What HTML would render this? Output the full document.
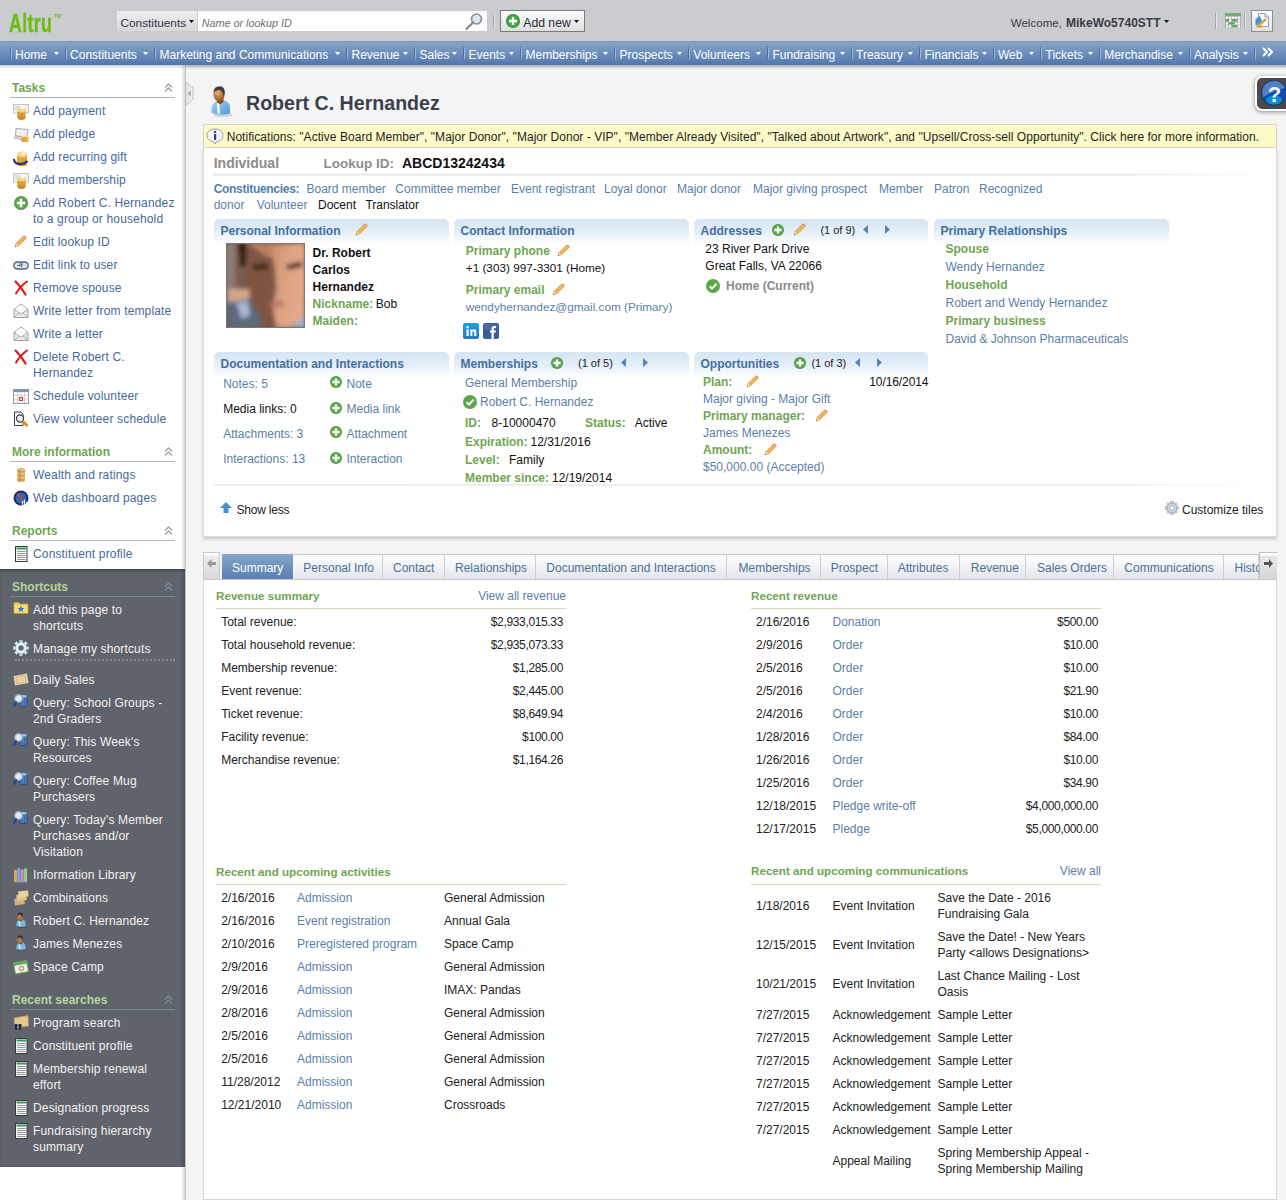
<!DOCTYPE html>
<html><head><meta charset="utf-8"><style>html,body{margin:0;padding:0;width:1286px;height:1200px;overflow:hidden;background:#f4f4f4;font-family:"Liberation Sans",sans-serif;font-size:12px;color:#1e1e1e;position:relative}
.t{position:absolute;white-space:nowrap;line-height:16px;font-size:12px}
.b{font-weight:bold}
.lk{color:#46699b}
.lk2{color:#5b7fa6}
.gr{color:#70a552;font-weight:bold}
.th{color:#44709f;font-weight:bold}
.wh{color:#f2f2f2}
.nav{color:#fff}
svg{position:absolute;overflow:visible}
</style></head>
<body>
<div style="position:absolute;left:0px;top:0px;width:1286px;height:41px;background:#cbccd0"></div>
<div class="t b" style="left:9px;top:9px;font-size:25px;line-height:28px;color:#6cbd14;letter-spacing:0.5px;-webkit-text-stroke:0.5px #6cbd14;transform:scaleX(0.71);transform-origin:0 0">Altru</div>
<div class="t b" style="left:54px;top:12.5px;font-size:5px;line-height:7px;color:#6cbd14">TM</div>
<div style="position:absolute;left:117px;top:11px;width:80px;height:20px;background:linear-gradient(#eeeeee,#d8d8d8)"></div>
<div class="t " style="left:120.5px;top:15.00px;color:#34344a;font-size:11.8px">Constituents</div>
<svg style="left:189px;top:20px" width="5" height="3" viewBox="0 0 5 3"><path d="M0 0 H5 L2.5 3Z" fill="#111"/></svg>
<div style="position:absolute;left:198px;top:11px;width:289px;height:20px;background:linear-gradient(#f3f3f3,#fff 4px)"></div>
<div class="t " style="left:201.7px;top:15.00px;color:#707070;font-style:italic;font-size:10.8px">Name or lookup ID</div>
<svg style="left:465px;top:13px" width="18" height="17" viewBox="0 0 18 17"><circle cx="11.5" cy="6" r="5" fill="#dbe9f5" stroke="#8b8b8b" stroke-width="1.6"/><path d="M8 9.5 L1.5 16" stroke="#8a8a8a" stroke-width="2.4" stroke-linecap="round"/></svg>
<div style="position:absolute;left:493px;top:12px;width:1px;height:17px;background:linear-gradient(rgba(160,160,165,0),#a5a5aa 30%,#a5a5aa 70%,rgba(160,160,165,0))"></div>
<div style="position:absolute;left:494px;top:12px;width:1px;height:17px;background:#dedee0"></div>
<div style="position:absolute;left:500px;top:10px;width:83px;height:20px;background:linear-gradient(#fdfdfd,#dedede);border:1px solid #7b7b7b"></div>
<svg style="left:506px;top:14px" width="14" height="14" viewBox="0 0 14 14"><circle cx="7" cy="7" r="7" fill="#2d8a36"/><circle cx="7" cy="7" r="6" fill="#43a84a"/><path d="M7 3v8M3 7h8" stroke="#fff" stroke-width="2.4"/></svg>
<div class="t " style="left:523.3px;top:15.00px;color:#2a2a3a;font-size:12.2px">Add new</div>
<svg style="left:574px;top:20px" width="5" height="3" viewBox="0 0 5 3"><path d="M0 0 H5 L2.5 3Z" fill="#111"/></svg>
<div class="t " style="left:1010.7px;top:15.00px;color:#3b3b45;font-size:11.6px">Welcome,</div>
<div class="t b" style="left:1066px;top:15.00px;color:#3b3b45">MikeWo5740STT</div>
<svg style="left:1164px;top:20px" width="5" height="3" viewBox="0 0 5 3"><path d="M0 0 H5 L2.5 3Z" fill="#111"/></svg>
<div style="position:absolute;left:1215px;top:13px;width:1px;height:16px;background:#a9a9ad"></div>
<div style="position:absolute;left:1216px;top:13px;width:1px;height:16px;background:#e6e6e8"></div>
<svg style="left:1225px;top:13px" width="16" height="15" viewBox="0 0 16 15"><rect x="0" y="0" width="16" height="15" fill="#a9a9a9"/><rect x="0" y="0" width="16" height="3" fill="#6cb46a"/><rect x="1" y="3.7" width="2.2" height="2.1" fill="#fff"/><rect x="4" y="3.7" width="2.2" height="2.1" fill="#fff"/><rect x="7" y="3.7" width="2.2" height="2.1" fill="#fff"/><rect x="10" y="3.7" width="2.2" height="2.1" fill="#fff"/><rect x="13" y="3.7" width="2.2" height="2.1" fill="#fff"/><rect x="1" y="6.6" width="2.2" height="2.1" fill="#fff"/><rect x="4" y="6.6" width="2.2" height="2.1" fill="#fff"/><rect x="7" y="6.6" width="2.2" height="2.1" fill="#fff"/><rect x="10" y="6.6" width="2.2" height="2.1" fill="#fff"/><rect x="13" y="6.6" width="2.2" height="2.1" fill="#fff"/><rect x="1" y="9.5" width="2.2" height="2.1" fill="#fff"/><rect x="4" y="9.5" width="2.2" height="2.1" fill="#fff"/><rect x="7" y="9.5" width="2.2" height="2.1" fill="#fff"/><rect x="10" y="9.5" width="2.2" height="2.1" fill="#fff"/><rect x="13" y="9.5" width="2.2" height="2.1" fill="#fff"/><rect x="1" y="12.399999999999999" width="2.2" height="2.1" fill="#fff"/><rect x="4" y="12.399999999999999" width="2.2" height="2.1" fill="#fff"/><rect x="7" y="12.399999999999999" width="2.2" height="2.1" fill="#fff"/><rect x="10" y="12.399999999999999" width="2.2" height="2.1" fill="#fff"/><rect x="13" y="12.399999999999999" width="2.2" height="2.1" fill="#fff"/><rect x="1" y="6.2" width="3" height="2.4" fill="#4ea24c"/><rect x="7" y="6.2" width="5" height="2.4" fill="#5aa858"/><rect x="3.5" y="9.2" width="6" height="2.2" fill="#5aa858"/><rect x="7" y="12" width="5" height="2.2" fill="#5aa858"/></svg>
<div style="position:absolute;left:1244px;top:13px;width:1px;height:16px;background:#a9a9ad"></div>
<div style="position:absolute;left:1245px;top:13px;width:1px;height:16px;background:#e6e6e8"></div>
<div style="position:absolute;left:1251px;top:10px;width:20px;height:20px;background:linear-gradient(#fafafa,#e2e2e2);border:1px solid #8e8e8e"></div>
<svg style="left:1255px;top:13px" width="14" height="15" viewBox="0 0 14 15"><path d="M3.5 0.5 H10 L13.5 4 V13.5 H3.5Z" fill="#f4f8fc" stroke="#8aa2c8"/><path d="M10 0.5 V4 H13.5" fill="#dfe8f4" stroke="#8aa2c8"/><path d="M0.5 6 L5 3 L7 8 L4.5 12 H0.5Z" fill="#2f9ae0"/><path d="M3 13 L11 6" stroke="#e8a23a" stroke-width="2.4"/><path d="M1.5 13.5 H7" stroke="#e09a30" stroke-width="2"/></svg>
<div style="position:absolute;left:0px;top:41px;width:1286px;height:24px;background:linear-gradient(#6b8db8 0px,#86a4c6 1px,#7797c0 8px,#5b7fb2 20px,#5276ab 24px)"></div>
<div style="position:absolute;left:0px;top:65px;width:1286px;height:4px;background:linear-gradient(rgba(120,120,120,.35),rgba(200,200,200,0))"></div>
<div style="position:absolute;left:10px;top:46px;width:1px;height:13px;background:linear-gradient(rgba(86,106,156,.3),#566a9c 30%,#566a9c 70%,rgba(86,106,156,.3))"></div>
<div style="position:absolute;left:11px;top:47px;width:1px;height:13px;background:linear-gradient(rgba(154,180,212,.3),#a4bcdc 30%,#a4bcdc 70%,rgba(154,180,212,.3))"></div>
<div style="position:absolute;left:65px;top:46px;width:1px;height:13px;background:linear-gradient(rgba(86,106,156,.3),#566a9c 30%,#566a9c 70%,rgba(86,106,156,.3))"></div>
<div style="position:absolute;left:66px;top:47px;width:1px;height:13px;background:linear-gradient(rgba(154,180,212,.3),#a4bcdc 30%,#a4bcdc 70%,rgba(154,180,212,.3))"></div>
<div style="position:absolute;left:154px;top:46px;width:1px;height:13px;background:linear-gradient(rgba(86,106,156,.3),#566a9c 30%,#566a9c 70%,rgba(86,106,156,.3))"></div>
<div style="position:absolute;left:155px;top:47px;width:1px;height:13px;background:linear-gradient(rgba(154,180,212,.3),#a4bcdc 30%,#a4bcdc 70%,rgba(154,180,212,.3))"></div>
<div style="position:absolute;left:346px;top:46px;width:1px;height:13px;background:linear-gradient(rgba(86,106,156,.3),#566a9c 30%,#566a9c 70%,rgba(86,106,156,.3))"></div>
<div style="position:absolute;left:347px;top:47px;width:1px;height:13px;background:linear-gradient(rgba(154,180,212,.3),#a4bcdc 30%,#a4bcdc 70%,rgba(154,180,212,.3))"></div>
<div style="position:absolute;left:414px;top:46px;width:1px;height:13px;background:linear-gradient(rgba(86,106,156,.3),#566a9c 30%,#566a9c 70%,rgba(86,106,156,.3))"></div>
<div style="position:absolute;left:415px;top:47px;width:1px;height:13px;background:linear-gradient(rgba(154,180,212,.3),#a4bcdc 30%,#a4bcdc 70%,rgba(154,180,212,.3))"></div>
<div style="position:absolute;left:463px;top:46px;width:1px;height:13px;background:linear-gradient(rgba(86,106,156,.3),#566a9c 30%,#566a9c 70%,rgba(86,106,156,.3))"></div>
<div style="position:absolute;left:464px;top:47px;width:1px;height:13px;background:linear-gradient(rgba(154,180,212,.3),#a4bcdc 30%,#a4bcdc 70%,rgba(154,180,212,.3))"></div>
<div style="position:absolute;left:520px;top:46px;width:1px;height:13px;background:linear-gradient(rgba(86,106,156,.3),#566a9c 30%,#566a9c 70%,rgba(86,106,156,.3))"></div>
<div style="position:absolute;left:521px;top:47px;width:1px;height:13px;background:linear-gradient(rgba(154,180,212,.3),#a4bcdc 30%,#a4bcdc 70%,rgba(154,180,212,.3))"></div>
<div style="position:absolute;left:614px;top:46px;width:1px;height:13px;background:linear-gradient(rgba(86,106,156,.3),#566a9c 30%,#566a9c 70%,rgba(86,106,156,.3))"></div>
<div style="position:absolute;left:615px;top:47px;width:1px;height:13px;background:linear-gradient(rgba(154,180,212,.3),#a4bcdc 30%,#a4bcdc 70%,rgba(154,180,212,.3))"></div>
<div style="position:absolute;left:688px;top:46px;width:1px;height:13px;background:linear-gradient(rgba(86,106,156,.3),#566a9c 30%,#566a9c 70%,rgba(86,106,156,.3))"></div>
<div style="position:absolute;left:689px;top:47px;width:1px;height:13px;background:linear-gradient(rgba(154,180,212,.3),#a4bcdc 30%,#a4bcdc 70%,rgba(154,180,212,.3))"></div>
<div style="position:absolute;left:767px;top:46px;width:1px;height:13px;background:linear-gradient(rgba(86,106,156,.3),#566a9c 30%,#566a9c 70%,rgba(86,106,156,.3))"></div>
<div style="position:absolute;left:768px;top:47px;width:1px;height:13px;background:linear-gradient(rgba(154,180,212,.3),#a4bcdc 30%,#a4bcdc 70%,rgba(154,180,212,.3))"></div>
<div style="position:absolute;left:851px;top:46px;width:1px;height:13px;background:linear-gradient(rgba(86,106,156,.3),#566a9c 30%,#566a9c 70%,rgba(86,106,156,.3))"></div>
<div style="position:absolute;left:852px;top:47px;width:1px;height:13px;background:linear-gradient(rgba(154,180,212,.3),#a4bcdc 30%,#a4bcdc 70%,rgba(154,180,212,.3))"></div>
<div style="position:absolute;left:919px;top:46px;width:1px;height:13px;background:linear-gradient(rgba(86,106,156,.3),#566a9c 30%,#566a9c 70%,rgba(86,106,156,.3))"></div>
<div style="position:absolute;left:920px;top:47px;width:1px;height:13px;background:linear-gradient(rgba(154,180,212,.3),#a4bcdc 30%,#a4bcdc 70%,rgba(154,180,212,.3))"></div>
<div style="position:absolute;left:993px;top:46px;width:1px;height:13px;background:linear-gradient(rgba(86,106,156,.3),#566a9c 30%,#566a9c 70%,rgba(86,106,156,.3))"></div>
<div style="position:absolute;left:994px;top:47px;width:1px;height:13px;background:linear-gradient(rgba(154,180,212,.3),#a4bcdc 30%,#a4bcdc 70%,rgba(154,180,212,.3))"></div>
<div style="position:absolute;left:1040px;top:46px;width:1px;height:13px;background:linear-gradient(rgba(86,106,156,.3),#566a9c 30%,#566a9c 70%,rgba(86,106,156,.3))"></div>
<div style="position:absolute;left:1041px;top:47px;width:1px;height:13px;background:linear-gradient(rgba(154,180,212,.3),#a4bcdc 30%,#a4bcdc 70%,rgba(154,180,212,.3))"></div>
<div style="position:absolute;left:1099px;top:46px;width:1px;height:13px;background:linear-gradient(rgba(86,106,156,.3),#566a9c 30%,#566a9c 70%,rgba(86,106,156,.3))"></div>
<div style="position:absolute;left:1100px;top:47px;width:1px;height:13px;background:linear-gradient(rgba(154,180,212,.3),#a4bcdc 30%,#a4bcdc 70%,rgba(154,180,212,.3))"></div>
<div style="position:absolute;left:1189px;top:46px;width:1px;height:13px;background:linear-gradient(rgba(86,106,156,.3),#566a9c 30%,#566a9c 70%,rgba(86,106,156,.3))"></div>
<div style="position:absolute;left:1190px;top:47px;width:1px;height:13px;background:linear-gradient(rgba(154,180,212,.3),#a4bcdc 30%,#a4bcdc 70%,rgba(154,180,212,.3))"></div>
<div style="position:absolute;left:1254px;top:46px;width:1px;height:13px;background:linear-gradient(rgba(86,106,156,.3),#566a9c 30%,#566a9c 70%,rgba(86,106,156,.3))"></div>
<div style="position:absolute;left:1255px;top:47px;width:1px;height:13px;background:linear-gradient(rgba(154,180,212,.3),#a4bcdc 30%,#a4bcdc 70%,rgba(154,180,212,.3))"></div>
<div class="t nav" style="left:15.0px;top:47.00px;">Home</div>
<svg style="left:54px;top:52px" width="5" height="3" viewBox="0 0 5 3"><path d="M0 0 H5 L2.5 3Z" fill="#fff"/></svg>
<div class="t nav" style="left:70.1px;top:47.00px;">Constituents</div>
<svg style="left:143px;top:52px" width="5" height="3" viewBox="0 0 5 3"><path d="M0 0 H5 L2.5 3Z" fill="#fff"/></svg>
<div class="t nav" style="left:159.5px;top:47.00px;">Marketing and Communications</div>
<svg style="left:335px;top:52px" width="5" height="3" viewBox="0 0 5 3"><path d="M0 0 H5 L2.5 3Z" fill="#fff"/></svg>
<div class="t nav" style="left:351.5px;top:47.00px;">Revenue</div>
<svg style="left:403px;top:52px" width="5" height="3" viewBox="0 0 5 3"><path d="M0 0 H5 L2.5 3Z" fill="#fff"/></svg>
<div class="t nav" style="left:419.5px;top:47.00px;">Sales</div>
<svg style="left:452px;top:52px" width="5" height="3" viewBox="0 0 5 3"><path d="M0 0 H5 L2.5 3Z" fill="#fff"/></svg>
<div class="t nav" style="left:468.5px;top:47.00px;">Events</div>
<svg style="left:509px;top:52px" width="5" height="3" viewBox="0 0 5 3"><path d="M0 0 H5 L2.5 3Z" fill="#fff"/></svg>
<div class="t nav" style="left:525.5px;top:47.00px;">Memberships</div>
<svg style="left:603px;top:52px" width="5" height="3" viewBox="0 0 5 3"><path d="M0 0 H5 L2.5 3Z" fill="#fff"/></svg>
<div class="t nav" style="left:619.5px;top:47.00px;">Prospects</div>
<svg style="left:677px;top:52px" width="5" height="3" viewBox="0 0 5 3"><path d="M0 0 H5 L2.5 3Z" fill="#fff"/></svg>
<div class="t nav" style="left:693.3px;top:47.00px;">Volunteers</div>
<svg style="left:756px;top:52px" width="5" height="3" viewBox="0 0 5 3"><path d="M0 0 H5 L2.5 3Z" fill="#fff"/></svg>
<div class="t nav" style="left:772.5px;top:47.00px;">Fundraising</div>
<svg style="left:840px;top:52px" width="5" height="3" viewBox="0 0 5 3"><path d="M0 0 H5 L2.5 3Z" fill="#fff"/></svg>
<div class="t nav" style="left:856.0px;top:47.00px;">Treasury</div>
<svg style="left:908px;top:52px" width="5" height="3" viewBox="0 0 5 3"><path d="M0 0 H5 L2.5 3Z" fill="#fff"/></svg>
<div class="t nav" style="left:924.5px;top:47.00px;">Financials</div>
<svg style="left:982px;top:52px" width="5" height="3" viewBox="0 0 5 3"><path d="M0 0 H5 L2.5 3Z" fill="#fff"/></svg>
<div class="t nav" style="left:998.0px;top:47.00px;">Web</div>
<svg style="left:1029px;top:52px" width="5" height="3" viewBox="0 0 5 3"><path d="M0 0 H5 L2.5 3Z" fill="#fff"/></svg>
<div class="t nav" style="left:1045.5px;top:47.00px;">Tickets</div>
<svg style="left:1088px;top:52px" width="5" height="3" viewBox="0 0 5 3"><path d="M0 0 H5 L2.5 3Z" fill="#fff"/></svg>
<div class="t nav" style="left:1104.2px;top:47.00px;">Merchandise</div>
<svg style="left:1178px;top:52px" width="5" height="3" viewBox="0 0 5 3"><path d="M0 0 H5 L2.5 3Z" fill="#fff"/></svg>
<div class="t nav" style="left:1194.0px;top:47.00px;">Analysis</div>
<svg style="left:1243px;top:52px" width="5" height="3" viewBox="0 0 5 3"><path d="M0 0 H5 L2.5 3Z" fill="#fff"/></svg>
<svg style="left:1262px;top:47px" width="12" height="10" viewBox="0 0 12 10"><path d="M1 1 L5 5 L1 9 M6 1 L10 5 L6 9" stroke="#fff" stroke-width="2" fill="none"/></svg>
<div style="position:absolute;left:0px;top:65px;width:185px;height:1135px;background:#fff"></div>
<div style="position:absolute;left:181px;top:65px;width:4px;height:1135px;background:linear-gradient(90deg,#fff,#e6e6e6 60%,#d6d6d6)"></div>
<div style="position:absolute;left:185px;top:65px;width:1px;height:1135px;background:#c4c4c4"></div>
<div style="position:absolute;left:0px;top:65px;width:1286px;height:4px;background:linear-gradient(rgba(120,120,120,.35),rgba(200,200,200,0))"></div>
<div style="position:absolute;left:0px;top:569px;width:185px;height:598px;background:#5f636b;box-shadow:inset 0 2px 2px rgba(0,0,0,.25), inset -3px 0 3px rgba(0,0,0,.12)"></div>
<svg style="left:185px;top:81px" width="9" height="25" viewBox="0 0 9 25"><defs><linearGradient id="ct" x1="0" x2="1"><stop offset="0" stop-color="#dcdcdc"/><stop offset="1" stop-color="#fafafa"/></linearGradient></defs><path d="M0.5 0.5 L8 7 V18 L0.5 24.5Z" fill="url(#ct)" stroke="#bdbdbd"/><path d="M6 9 L2.5 12.5 L6 16Z" fill="#b0b0b0"/></svg>
<div class="t b" style="left:12px;top:80.00px;color:#6fa650">Tasks</div>
<div style="position:absolute;left:10px;top:97px;width:165px;height:1px;background:#b5b5b5"></div>
<svg style="left:164px;top:83px" width="9" height="9" viewBox="0 0 9 9"><path d="M1 4.5 L4.5 1 L8 4.5 M1 8.5 L4.5 5 L8 8.5" stroke="#a0a0a0" stroke-width="1.3" fill="none"/></svg>
<div class="t lk" style="left:33px;top:103.00px;letter-spacing:.15px">Add payment</div>
<svg style="left:13px;top:103px" width="16" height="17" viewBox="0 -1 16 17"><rect x="0.5" y="0.5" width="15" height="8.5" fill="#f2f2f2" stroke="#c4c4c4"/><path d="M2 3 H7 M2 5 H6" stroke="#c8c8c8"/><ellipse cx="8.5" cy="12.5" rx="4.2" ry="3.6" fill="#c98a2a"/><rect x="4.3" y="6" width="8.4" height="6.5" fill="#e0a83e"/><ellipse cx="8.5" cy="6" rx="4.2" ry="2.6" fill="#f6d98c"/><path d="M6 8 V12 M9 8 V13" stroke="#b8791f" stroke-width="0.8"/><circle cx="9.5" cy="4" r="1.5" fill="#fff" opacity="0.8"/></svg>
<div class="t lk" style="left:33px;top:126.00px;letter-spacing:.15px">Add pledge</div>
<svg style="left:13px;top:126px" width="16" height="17" viewBox="0 -1 16 17"><path d="M3 1.5 L15 2.5 L14 10 L2.5 9Z" fill="#f0f0f0" stroke="#a9a9a9"/><path d="M1 11 L3 9 L12 10 L10 13Z" fill="#d8d8d8" stroke="#a0a0a0" stroke-width="0.7"/><rect x="8.5" y="9.5" width="3.5" height="5.5" fill="#dca03a"/><rect x="12" y="9.5" width="3.5" height="5.5" fill="#e8b04a"/><ellipse cx="10.2" cy="9.5" rx="1.8" ry="1" fill="#f6d98c"/><ellipse cx="13.8" cy="9.5" rx="1.8" ry="1" fill="#f6d98c"/></svg>
<div class="t lk" style="left:33px;top:149.00px;letter-spacing:.15px">Add recurring gift</div>
<svg style="left:13px;top:149px" width="16" height="17" viewBox="0 -1 16 17"><rect x="4" y="4" width="10" height="10" fill="#dfa53c"/><ellipse cx="9" cy="4.5" rx="5" ry="3" fill="#f6d98c"/><ellipse cx="9" cy="14" rx="5" ry="2" fill="#c98a2a"/><circle cx="10.5" cy="3.5" r="1.6" fill="#fff" opacity=".8"/><path d="M0.8 9 Q1.5 14.5 8 14 Q12 13.5 14.5 11" stroke="#1e2f8c" stroke-width="2" fill="none"/></svg>
<div class="t lk" style="left:33px;top:172.00px;letter-spacing:.15px">Add membership</div>
<svg style="left:13px;top:172px" width="16" height="17" viewBox="0 -1 16 17"><rect x="0.5" y="0.5" width="15" height="8.5" fill="#f2f2f2" stroke="#c4c4c4"/><path d="M2 3 H7 M2 5 H6" stroke="#c8c8c8"/><ellipse cx="8.5" cy="12.5" rx="4.2" ry="3.6" fill="#c98a2a"/><rect x="4.3" y="6" width="8.4" height="6.5" fill="#e0a83e"/><ellipse cx="8.5" cy="6" rx="4.2" ry="2.6" fill="#f6d98c"/><path d="M6 8 V12 M9 8 V13" stroke="#b8791f" stroke-width="0.8"/><circle cx="9.5" cy="4" r="1.5" fill="#fff" opacity="0.8"/></svg>
<div class="t lk" style="left:33px;top:195.00px;letter-spacing:.15px">Add Robert C. Hernandez</div>
<div class="t lk" style="left:33px;top:211.00px;letter-spacing:.15px">to a group or household</div>
<svg style="left:14px;top:196px" width="14" height="14" viewBox="0 0 12 12"><circle cx="6" cy="6" r="6" fill="#4b9840"/><circle cx="6" cy="6" r="5.3" fill="#5aa84a"/><path d="M6 2.4v7.2M2.4 6h7.2" stroke="#fff" stroke-width="2.3"/></svg>
<div class="t lk" style="left:33px;top:234.00px;letter-spacing:.15px">Edit lookup ID</div>
<svg style="left:14px;top:235px" width="13" height="13" viewBox="0 0 13 13"><path d="M1.2 11.8 L2 8.6 L9.6 1 L12 3.4 L4.4 11Z" fill="#f2b655" stroke="#c98a3a" stroke-width="0.7"/><path d="M9.6 1 L12 3.4 L12.6 2.8 Q12.8 1 10.2 0.4Z" fill="#e88a8a"/><path d="M1.2 11.8 L2 8.6 L4.4 11Z" fill="#f0e0c0"/><path d="M1.2 11.8 L1.5 10.6 L2.4 11.5Z" fill="#444"/></svg>
<div class="t lk" style="left:33px;top:257.00px;letter-spacing:.15px">Edit link to user</div>
<svg style="left:13px;top:257px" width="16" height="16" viewBox="0 0 16 16"><rect x="0.8" y="5" width="14.4" height="7" rx="3.5" fill="#dbe3ee" stroke="#50658c" stroke-width="1.4"/><path d="M4 8.5 H7.5 M8.5 7 V10 M6 7 H10" stroke="#50658c" stroke-width="1.2" fill="none"/></svg>
<div class="t lk" style="left:33px;top:280.00px;letter-spacing:.15px">Remove spouse</div>
<svg style="left:13px;top:280px" width="16" height="16" viewBox="0 0 16 16"><path d="M2.5 1.5 Q7 6 12.5 14.5" stroke="#e01a1a" stroke-width="2.2" fill="none" stroke-linecap="round"/><path d="M14 1.5 Q8 5.5 3 13.5" stroke="#e01a1a" stroke-width="2" fill="none" stroke-linecap="round"/></svg>
<div class="t lk" style="left:33px;top:303.00px;letter-spacing:.15px">Write letter from template</div>
<svg style="left:13px;top:303px" width="16" height="16" viewBox="0 0 16 16"><path d="M1 6.5 L8 1 L15 6.5 V14.5 H1Z" fill="#eaeaea" stroke="#a0a0a0"/><path d="M3 5 L8 1.8 L13 5 V9 L8 11.5 L3 9Z" fill="#fafafa"/><path d="M1 6.5 L8 11 L15 6.5 M1 14.5 L6 10 M15 14.5 L10 10" stroke="#a8a8a8" fill="none"/></svg>
<div class="t lk" style="left:33px;top:326.00px;letter-spacing:.15px">Write a letter</div>
<svg style="left:13px;top:326px" width="16" height="16" viewBox="0 0 16 16"><path d="M1 6.5 L8 1 L15 6.5 V14.5 H1Z" fill="#eaeaea" stroke="#a0a0a0"/><path d="M3 5 L8 1.8 L13 5 V9 L8 11.5 L3 9Z" fill="#fafafa"/><path d="M1 6.5 L8 11 L15 6.5 M1 14.5 L6 10 M15 14.5 L10 10" stroke="#a8a8a8" fill="none"/></svg>
<div class="t lk" style="left:33px;top:349.00px;letter-spacing:.15px">Delete Robert C.</div>
<div class="t lk" style="left:33px;top:365.00px;letter-spacing:.15px">Hernandez</div>
<svg style="left:13px;top:349px" width="16" height="16" viewBox="0 0 16 16"><path d="M2.5 1.5 Q7 6 12.5 14.5" stroke="#e01a1a" stroke-width="2.2" fill="none" stroke-linecap="round"/><path d="M14 1.5 Q8 5.5 3 13.5" stroke="#e01a1a" stroke-width="2" fill="none" stroke-linecap="round"/></svg>
<div class="t lk" style="left:33px;top:388.00px;letter-spacing:.15px">Schedule volunteer</div>
<svg style="left:13px;top:388px" width="16" height="16" viewBox="0 0 16 16"><rect x="0.5" y="1.5" width="15" height="14" fill="#fff" stroke="#8b9bb3"/><rect x="0.5" y="1.5" width="15" height="2.5" fill="#7d93b8"/><path d="M4.5 4 V15 M8 4 V15 M11.5 4 V15 M1 7.5 H15 M1 11 H15" stroke="#c9c9c9" stroke-width="0.8"/><rect x="6.5" y="9.5" width="3" height="3" fill="none" stroke="#e33" stroke-width="1"/></svg>
<div class="t lk" style="left:33px;top:411.00px;letter-spacing:.15px">View volunteer schedule</div>
<svg style="left:13px;top:411px" width="16" height="16" viewBox="0 0 16 16"><path d="M1.5 1 H8 L10 3 V14.5 H1.5Z" fill="#fff" stroke="#2d3d70"/><circle cx="7" cy="7.5" r="3.6" fill="#e8eef4" stroke="#3a3a3a" stroke-width="1.2"/><path d="M9.5 10 L14.5 15" stroke="#d98a2a" stroke-width="2.6"/></svg>
<div class="t b" style="left:12px;top:444.00px;color:#6fa650">More information</div>
<div style="position:absolute;left:10px;top:461px;width:165px;height:1px;background:#b5b5b5"></div>
<svg style="left:164px;top:447px" width="9" height="9" viewBox="0 0 9 9"><path d="M1 4.5 L4.5 1 L8 4.5 M1 8.5 L4.5 5 L8 8.5" stroke="#a0a0a0" stroke-width="1.3" fill="none"/></svg>
<div class="t lk" style="left:33px;top:467.00px;letter-spacing:.15px">Wealth and ratings</div>
<svg style="left:13px;top:467px" width="16" height="16" viewBox="0 0 16 16"><path d="M4 2 Q8 0 12 2 V14 Q8 16 4 14Z" fill="#d7a65a"/><path d="M4 2 Q8 4 12 2 M4 6 Q8 8 12 6 M4 10 Q8 12 12 10" stroke="#f1d39a" stroke-width="1.2" fill="none"/><path d="M7 3 V14" stroke="#b0782e" stroke-width="0.8"/></svg>
<div class="t lk" style="left:33px;top:490.00px;letter-spacing:.15px">Web dashboard pages</div>
<svg style="left:13px;top:490px" width="16" height="16" viewBox="0 0 16 16"><circle cx="8" cy="8" r="7.5" fill="#13306a"/><circle cx="8" cy="8" r="5.6" fill="#3a64a8"/><path d="M4.5 3.5 L8.5 8.5" stroke="#ff3a3a" stroke-width="1.4"/><path d="M9.5 15 V11 M11.5 15 V9.5 M13.5 15 V12" stroke="#e8eef8" stroke-width="1.3"/></svg>
<div class="t b" style="left:12px;top:523.00px;color:#6fa650">Reports</div>
<div style="position:absolute;left:10px;top:540px;width:165px;height:1px;background:#b5b5b5"></div>
<svg style="left:164px;top:526px" width="9" height="9" viewBox="0 0 9 9"><path d="M1 4.5 L4.5 1 L8 4.5 M1 8.5 L4.5 5 L8 8.5" stroke="#a0a0a0" stroke-width="1.3" fill="none"/></svg>
<div class="t lk" style="left:33px;top:546.00px;letter-spacing:.15px">Constituent profile</div>
<svg style="left:13px;top:546px" width="16" height="16" viewBox="0 0 16 16"><rect x="2.5" y="0.5" width="11.5" height="15" fill="#fafafa" stroke="#3a3a3a"/><rect x="3.5" y="1.5" width="9.5" height="2" fill="#2f9a5a"/><path d="M4 5.5 H12.5 M4 7.5 H12.5 M4 9.5 H12.5 M4 11.5 H12.5 M4 13.5 H12.5" stroke="#8a8a8a" stroke-width="0.9"/></svg>
<div class="t b" style="left:12px;top:579.00px;color:#b3d79a">Shortcuts</div>
<div style="position:absolute;left:10px;top:596px;width:165px;height:1px;background:#7a8894"></div>
<svg style="left:164px;top:582px" width="9" height="9" viewBox="0 0 9 9"><path d="M1 4.5 L4.5 1 L8 4.5 M1 8.5 L4.5 5 L8 8.5" stroke="#7d8b98" stroke-width="1.3" fill="none"/></svg>
<div class="t wh" style="left:33px;top:602.00px;letter-spacing:.15px">Add this page to</div>
<div class="t wh" style="left:33px;top:618.00px;letter-spacing:.15px">shortcuts</div>
<svg style="left:13px;top:600px" width="16" height="16" viewBox="0 0 16 16"><path d="M1 2.5 H5.5 L7 4 H15 V13.5 H1Z" fill="#f7cf5a" stroke="#c9952a"/><rect x="1.5" y="5" width="13" height="8" fill="#f9dc7a"/><path d="M8 5.5 L9 8 L11.6 8 L9.5 9.6 L10.3 12.2 L8 10.6 L5.7 12.2 L6.5 9.6 L4.4 8 L7 8Z" fill="#1f78d8"/></svg>
<div class="t wh" style="left:33px;top:641.00px;letter-spacing:.15px">Manage my shortcuts</div>
<svg style="left:13px;top:640px" width="16" height="16" viewBox="0 0 16 16"><rect x="6.6" y="0.3" width="2.8" height="3.4" fill="#f4f8fc" stroke="#8fb0d0" stroke-width="0.5" transform="rotate(0 8 8)"/><rect x="6.6" y="0.3" width="2.8" height="3.4" fill="#f4f8fc" stroke="#8fb0d0" stroke-width="0.5" transform="rotate(45 8 8)"/><rect x="6.6" y="0.3" width="2.8" height="3.4" fill="#f4f8fc" stroke="#8fb0d0" stroke-width="0.5" transform="rotate(90 8 8)"/><rect x="6.6" y="0.3" width="2.8" height="3.4" fill="#f4f8fc" stroke="#8fb0d0" stroke-width="0.5" transform="rotate(135 8 8)"/><rect x="6.6" y="0.3" width="2.8" height="3.4" fill="#f4f8fc" stroke="#8fb0d0" stroke-width="0.5" transform="rotate(180 8 8)"/><rect x="6.6" y="0.3" width="2.8" height="3.4" fill="#f4f8fc" stroke="#8fb0d0" stroke-width="0.5" transform="rotate(225 8 8)"/><rect x="6.6" y="0.3" width="2.8" height="3.4" fill="#f4f8fc" stroke="#8fb0d0" stroke-width="0.5" transform="rotate(270 8 8)"/><rect x="6.6" y="0.3" width="2.8" height="3.4" fill="#f4f8fc" stroke="#8fb0d0" stroke-width="0.5" transform="rotate(315 8 8)"/><circle cx="8" cy="8" r="5.6" fill="#f4f8fc" stroke="#8fb0d0" stroke-width="0.8"/><circle cx="8" cy="8" r="2.8" fill="#5f636b" stroke="#8fb0d0" stroke-width="0.8"/></svg>
<div class="t wh" style="left:33px;top:672.00px;letter-spacing:.15px">Daily Sales</div>
<svg style="left:13px;top:672px" width="16" height="16" viewBox="0 0 16 16"><path d="M0.5 4 L14 1.5 L15.5 11 L2 13.5Z" fill="#e6cfa2"/><path d="M3 5 L12 3.5 L13 10 L4 11.5Z" fill="none" stroke="#cdb080" stroke-width="0.7"/></svg>
<div class="t wh" style="left:33px;top:695.00px;letter-spacing:.15px">Query: School Groups -</div>
<div class="t wh" style="left:33px;top:711.00px;letter-spacing:.15px">2nd Graders</div>
<svg style="left:13px;top:693px" width="16" height="16" viewBox="0 0 16 16"><rect x="6.5" y="3" width="7.5" height="10.5" rx="1" fill="#4d7fbd" stroke="#24467a" stroke-width="0.8"/><ellipse cx="10.2" cy="3.2" rx="3.7" ry="1.2" fill="#9cc0e8"/><path d="M8.5 5 V13 M11.5 5 V13" stroke="#2f5a94" stroke-width="0.6"/><circle cx="5.5" cy="5.5" r="3.8" fill="#e0e8f0" stroke="#9aa8b6" stroke-width="1.2"/><path d="M3.5 8.5 L0.8 13.5" stroke="#1a40b0" stroke-width="2.2"/></svg>
<div class="t wh" style="left:33px;top:734.00px;letter-spacing:.15px">Query: This Week&#x27;s</div>
<div class="t wh" style="left:33px;top:750.00px;letter-spacing:.15px">Resources</div>
<svg style="left:13px;top:732px" width="16" height="16" viewBox="0 0 16 16"><rect x="6.5" y="3" width="7.5" height="10.5" rx="1" fill="#4d7fbd" stroke="#24467a" stroke-width="0.8"/><ellipse cx="10.2" cy="3.2" rx="3.7" ry="1.2" fill="#9cc0e8"/><path d="M8.5 5 V13 M11.5 5 V13" stroke="#2f5a94" stroke-width="0.6"/><circle cx="5.5" cy="5.5" r="3.8" fill="#e0e8f0" stroke="#9aa8b6" stroke-width="1.2"/><path d="M3.5 8.5 L0.8 13.5" stroke="#1a40b0" stroke-width="2.2"/></svg>
<div class="t wh" style="left:33px;top:773.00px;letter-spacing:.15px">Query: Coffee Mug</div>
<div class="t wh" style="left:33px;top:789.00px;letter-spacing:.15px">Purchasers</div>
<svg style="left:13px;top:771px" width="16" height="16" viewBox="0 0 16 16"><rect x="6.5" y="3" width="7.5" height="10.5" rx="1" fill="#4d7fbd" stroke="#24467a" stroke-width="0.8"/><ellipse cx="10.2" cy="3.2" rx="3.7" ry="1.2" fill="#9cc0e8"/><path d="M8.5 5 V13 M11.5 5 V13" stroke="#2f5a94" stroke-width="0.6"/><circle cx="5.5" cy="5.5" r="3.8" fill="#e0e8f0" stroke="#9aa8b6" stroke-width="1.2"/><path d="M3.5 8.5 L0.8 13.5" stroke="#1a40b0" stroke-width="2.2"/></svg>
<div class="t wh" style="left:33px;top:812.00px;letter-spacing:.15px">Query: Today&#x27;s Member</div>
<div class="t wh" style="left:33px;top:828.00px;letter-spacing:.15px">Purchases and/or</div>
<div class="t wh" style="left:33px;top:844.00px;letter-spacing:.15px">Visitation</div>
<svg style="left:13px;top:810px" width="16" height="16" viewBox="0 0 16 16"><rect x="6.5" y="3" width="7.5" height="10.5" rx="1" fill="#4d7fbd" stroke="#24467a" stroke-width="0.8"/><ellipse cx="10.2" cy="3.2" rx="3.7" ry="1.2" fill="#9cc0e8"/><path d="M8.5 5 V13 M11.5 5 V13" stroke="#2f5a94" stroke-width="0.6"/><circle cx="5.5" cy="5.5" r="3.8" fill="#e0e8f0" stroke="#9aa8b6" stroke-width="1.2"/><path d="M3.5 8.5 L0.8 13.5" stroke="#1a40b0" stroke-width="2.2"/></svg>
<div class="t wh" style="left:33px;top:867.00px;letter-spacing:.15px">Information Library</div>
<svg style="left:13px;top:867px" width="16" height="16" viewBox="0 0 16 16"><rect x="1" y="3" width="3" height="12" fill="#e9a24a"/><rect x="4.3" y="1" width="3" height="14" fill="#79a7dc"/><rect x="7.6" y="2.5" width="3" height="12.5" fill="#c68fd8"/><rect x="10.9" y="1.5" width="3.2" height="13.5" fill="#9cc87a"/><path d="M1 15 H14" stroke="#999"/></svg>
<div class="t wh" style="left:33px;top:890.00px;letter-spacing:.15px">Combinations</div>
<svg style="left:13px;top:890px" width="16" height="16" viewBox="0 0 16 16"><path d="M1 9 L11 7.5 L12 14 L2 15.5Z" fill="#cfae78"/><path d="M3 5 L13 3.5 L14 10 L4 11.5Z" fill="#dfc28e"/><path d="M5 1.5 L15 0.5 L15.5 6.5 L6 7.5Z" fill="#ecd4a4"/></svg>
<div class="t wh" style="left:33px;top:913.00px;letter-spacing:.15px">Robert C. Hernandez</div>
<svg style="left:15px;top:912px" width="12" height="16" viewBox="3 3 24 32"><ellipse cx="17" cy="33" rx="10" ry="2.2" fill="rgba(0,0,0,.15)"/><path d="M5.5 31 Q5 22 10.5 19 L17.5 18 Q23.5 19.5 24 25 L24 31.5 Q15 34 5.5 31Z" fill="#78b8e8"/><path d="M11 21.5 L13.5 21 L13.8 31.5 L11.5 31.5Z" fill="#fff"/><path d="M11 16 H17.5 V20 L14 22.5 L11 20Z" fill="#8a4a1c"/><ellipse cx="13" cy="12.5" rx="5.6" ry="6.6" fill="#b87440"/><path d="M7.5 10.5 Q7.8 4.2 13.8 4.2 Q19.2 4.6 18.8 11 L17.6 15 Q17 8.5 13.5 8 Q9.5 7.6 7.5 10.5Z" fill="#2e3036"/></svg>
<div class="t wh" style="left:33px;top:936.00px;letter-spacing:.15px">James Menezes</div>
<svg style="left:15px;top:935px" width="12" height="16" viewBox="3 3 24 32"><ellipse cx="17" cy="33" rx="10" ry="2.2" fill="rgba(0,0,0,.15)"/><path d="M5.5 31 Q5 22 10.5 19 L17.5 18 Q23.5 19.5 24 25 L24 31.5 Q15 34 5.5 31Z" fill="#78b8e8"/><path d="M11 21.5 L13.5 21 L13.8 31.5 L11.5 31.5Z" fill="#fff"/><path d="M11 16 H17.5 V20 L14 22.5 L11 20Z" fill="#8a4a1c"/><ellipse cx="13" cy="12.5" rx="5.6" ry="6.6" fill="#b87440"/><path d="M7.5 10.5 Q7.8 4.2 13.8 4.2 Q19.2 4.6 18.8 11 L17.6 15 Q17 8.5 13.5 8 Q9.5 7.6 7.5 10.5Z" fill="#2e3036"/></svg>
<div class="t wh" style="left:33px;top:959.00px;letter-spacing:.15px">Space Camp</div>
<svg style="left:13px;top:959px" width="16" height="16" viewBox="0 0 16 16"><path d="M0.5 4 L13.5 1.5 L15.5 12.5 L2.5 15Z" fill="#eef4e8" stroke="#67a65a"/><path d="M0.5 4 L13.5 1.5 L14 4.5 L1 7Z" fill="#67a65a"/><circle cx="8.5" cy="9.5" r="2.2" fill="none" stroke="#d46060" stroke-width="1"/></svg>
<div style="position:absolute;left:15px;top:659px;width:160px;border-top:2px dotted #858b93"></div>
<div class="t b" style="left:12px;top:992.00px;color:#b3d79a">Recent searches</div>
<div style="position:absolute;left:10px;top:1009px;width:165px;height:1px;background:#7a8894"></div>
<svg style="left:164px;top:995px" width="9" height="9" viewBox="0 0 9 9"><path d="M1 4.5 L4.5 1 L8 4.5 M1 8.5 L4.5 5 L8 8.5" stroke="#7d8b98" stroke-width="1.3" fill="none"/></svg>
<div class="t wh" style="left:33px;top:1015.00px;letter-spacing:.15px">Program search</div>
<svg style="left:13px;top:1015px" width="16" height="16" viewBox="0 0 16 16"><path d="M1 3 L15 0.5 L15.5 11 L2 13Z" fill="#e3c98f" stroke="#b99a66" stroke-width="0.8"/><path d="M3 11 V15 M7 11 V15" stroke="#1b2c55" stroke-width="2.2"/><circle cx="3" cy="10.5" r="1.8" fill="#1b2c55"/><circle cx="7" cy="10.5" r="1.8" fill="#1b2c55"/></svg>
<div class="t wh" style="left:33px;top:1038.00px;letter-spacing:.15px">Constituent profile</div>
<svg style="left:13px;top:1038px" width="16" height="16" viewBox="0 0 16 16"><rect x="2.5" y="0.5" width="11.5" height="15" fill="#fafafa" stroke="#3a3a3a"/><rect x="3.5" y="1.5" width="9.5" height="2" fill="#2f9a5a"/><path d="M4 5.5 H12.5 M4 7.5 H12.5 M4 9.5 H12.5 M4 11.5 H12.5 M4 13.5 H12.5" stroke="#8a8a8a" stroke-width="0.9"/></svg>
<div class="t wh" style="left:33px;top:1061.00px;letter-spacing:.15px">Membership renewal</div>
<div class="t wh" style="left:33px;top:1077.00px;letter-spacing:.15px">effort</div>
<svg style="left:13px;top:1061px" width="16" height="16" viewBox="0 0 16 16"><rect x="2.5" y="0.5" width="11.5" height="15" fill="#fafafa" stroke="#3a3a3a"/><rect x="3.5" y="1.5" width="9.5" height="2" fill="#2f9a5a"/><path d="M4 5.5 H12.5 M4 7.5 H12.5 M4 9.5 H12.5 M4 11.5 H12.5 M4 13.5 H12.5" stroke="#8a8a8a" stroke-width="0.9"/></svg>
<div class="t wh" style="left:33px;top:1100.00px;letter-spacing:.15px">Designation progress</div>
<svg style="left:13px;top:1100px" width="16" height="16" viewBox="0 0 16 16"><rect x="2.5" y="0.5" width="11.5" height="15" fill="#fafafa" stroke="#3a3a3a"/><rect x="3.5" y="1.5" width="9.5" height="2" fill="#2f9a5a"/><path d="M4 5.5 H12.5 M4 7.5 H12.5 M4 9.5 H12.5 M4 11.5 H12.5 M4 13.5 H12.5" stroke="#8a8a8a" stroke-width="0.9"/></svg>
<div class="t wh" style="left:33px;top:1123.00px;letter-spacing:.15px">Fundraising hierarchy</div>
<div class="t wh" style="left:33px;top:1139.00px;letter-spacing:.15px">summary</div>
<svg style="left:13px;top:1123px" width="16" height="16" viewBox="0 0 16 16"><rect x="2.5" y="0.5" width="11.5" height="15" fill="#fafafa" stroke="#3a3a3a"/><rect x="3.5" y="1.5" width="9.5" height="2" fill="#2f9a5a"/><path d="M4 5.5 H12.5 M4 7.5 H12.5 M4 9.5 H12.5 M4 11.5 H12.5 M4 13.5 H12.5" stroke="#8a8a8a" stroke-width="0.9"/></svg>
<svg style="left:206px;top:82px" width="30" height="36" viewBox="0 0 30 36"><defs><radialGradient id="fc" cx="40%" cy="35%" r="60%"><stop offset="0" stop-color="#e8b070"/><stop offset="1" stop-color="#a85e2a"/></radialGradient><linearGradient id="bd" x1="0" y1="0" x2="1" y2="1"><stop offset="0" stop-color="#9ad2f4"/><stop offset="1" stop-color="#5a9cd4"/></linearGradient></defs><ellipse cx="17" cy="33" rx="10" ry="2.2" fill="rgba(0,0,0,.12)"/><path d="M5.5 31 Q5 22 10.5 19 L17.5 18 Q23.5 19.5 24 25 L24 31.5 Q15 34 5.5 31Z" fill="url(#bd)"/><path d="M11 21.5 L13.5 21 L13.8 31.5 L11.5 31.5Z" fill="#fff"/><path d="M11 16 H17.5 V20 L14 22.5 L11 20Z" fill="#8a4a1c"/><ellipse cx="13" cy="12.5" rx="5.6" ry="6.6" fill="url(#fc)"/><path d="M7.5 10.5 Q7.8 4.2 13.8 4.2 Q19.2 4.6 18.8 11 L17.6 15 Q17 8.5 13.5 8 Q9.5 7.6 7.5 10.5Z" fill="#3b3e46"/></svg>
<div class="t b" style="left:246px;top:95.00px;font-size:19.6px;color:#3b404c">Robert C. Hernandez</div>
<div style="position:absolute;left:1255px;top:76px;width:40px;height:31px;background:#4a4a4c;border:2px solid #fff;border-radius:7px;box-shadow:0 1px 4px rgba(0,0,0,.45)"></div>
<svg style="left:1261px;top:80px" width="26" height="26" viewBox="0 0 26 26"><circle cx="13" cy="13" r="12.6" fill="#0b4fb0" stroke="#2a2a30" stroke-width="0.8"/><path d="M1 12 A12 12 0 0 1 24 8 Q14 10 2 17Z" fill="#4f80c8"/><ellipse cx="13" cy="20" rx="8" ry="4.5" fill="#0a8ed8"/><text x="13.5" y="21.5" text-anchor="middle" font-family="Liberation Sans" font-weight="bold" font-size="22" fill="#f4f4f4">?</text></svg>
<div style="position:absolute;left:203px;top:147px;width:1072px;height:389px;background:#fff;border:1px solid #dcdcdc;border-top:none;box-shadow:0 2px 3px rgba(0,0,0,.18)"></div>
<div style="position:absolute;left:203px;top:124px;width:1072px;height:22px;background:#fcfac9;border:1px solid #d3d3c6"></div>
<svg style="left:206px;top:128px" width="18" height="17" viewBox="0 0 18 17"><path d="M9 1 C3.5 1 1 4 1 7.5 C1 11 4 13.5 7.5 13.7 L9 16 L10.5 13.7 C14 13.5 17 11 17 7.5 C17 4 14.5 1 9 1Z" fill="#f4f4f4" stroke="#a0a0a0"/><rect x="8" y="6" width="2.2" height="6" fill="#1f3fb0"/><circle cx="9.1" cy="3.9" r="1.2" fill="#1f3fb0"/></svg>
<div class="t " style="left:226.7px;top:129.00px;color:#1e1e1e;letter-spacing:.04px">Notifications: &quot;Active Board Member&quot;, &quot;Major Donor&quot;, &quot;Major Donor - VIP&quot;, &quot;Member Already Visited&quot;, &quot;Talked about Artwork&quot;, and &quot;Upsell/Cross-sell Opportunity&quot;. Click here for more information.</div>
<div class="t b" style="left:213.7px;top:155.00px;font-size:14px;color:#8c8c8c">Individual</div>
<div class="t b" style="left:323.6px;top:156.00px;font-size:13.5px;color:#8c8c8c">Lookup ID:</div>
<div class="t b" style="left:402px;top:155.00px;font-size:14px;color:#111">ABCD13242434</div>
<div style="position:absolute;left:213px;top:173px;width:1050px;height:4px;background:linear-gradient(rgba(255,255,255,0),rgba(225,225,225,.9) 40%,rgba(240,240,240,.6) 70%,rgba(255,255,255,0));-webkit-mask-image:linear-gradient(90deg,#000 85%,transparent)"></div>
<div class="t b" style="left:213.7px;top:181.00px;color:#4f7fb0;letter-spacing:-.3px">Constituencies:</div>
<div class="t lk2" style="left:306.5px;top:181.00px;">Board member</div>
<div class="t lk2" style="left:395.3px;top:181.00px;">Committee member</div>
<div class="t lk2" style="left:511px;top:181.00px;">Event registrant</div>
<div class="t lk2" style="left:604px;top:181.00px;">Loyal donor</div>
<div class="t lk2" style="left:677px;top:181.00px;">Major donor</div>
<div class="t lk2" style="left:753px;top:181.00px;">Major giving prospect</div>
<div class="t lk2" style="left:879px;top:181.00px;">Member</div>
<div class="t lk2" style="left:934px;top:181.00px;">Patron</div>
<div class="t lk2" style="left:979px;top:181.00px;">Recognized</div>
<div class="t lk2" style="left:213.7px;top:197.00px;">donor</div>
<div class="t lk2" style="left:256.7px;top:197.00px;">Volunteer</div>
<div class="t " style="left:318px;top:197.00px;color:#111">Docent</div>
<div class="t " style="left:365.4px;top:197.00px;color:#111">Translator</div>
<div style="position:absolute;left:214px;top:219px;width:235px;height:25px;background:linear-gradient(#d5e5f2,#e3eef8 50%,#fdfeff);border-radius:5px 5px 0 0"></div>
<div class="t th" style="left:220.5px;top:223.00px;">Personal Information</div>
<svg style="left:355px;top:223px" width="13" height="13" viewBox="0 0 13 13"><path d="M1.2 11.8 L2 8.6 L9.6 1 L12 3.4 L4.4 11Z" fill="#f2b655" stroke="#c98a3a" stroke-width="0.7"/><path d="M9.6 1 L12 3.4 L12.6 2.8 Q12.8 1 10.2 0.4Z" fill="#e88a8a"/><path d="M1.2 11.8 L2 8.6 L4.4 11Z" fill="#f0e0c0"/><path d="M1.2 11.8 L1.5 10.6 L2.4 11.5Z" fill="#444"/></svg>
<svg style="left:226px;top:243px" width="79" height="85" viewBox="0 0 79 85"><defs><filter id="bl" filterUnits="userSpaceOnUse" x="0" y="0" width="79" height="85"><feGaussianBlur stdDeviation="2.2"/></filter><linearGradient id="sk" x1="0" y1="0" x2="1" y2="0.3"><stop offset="0" stop-color="#c98d6d"/><stop offset="0.5" stop-color="#dca182"/><stop offset="1" stop-color="#e2aa8c"/></linearGradient></defs><rect width="79" height="85" fill="#7e5543"/><g filter="url(#bl)"><rect x="0" y="0" width="9" height="60" fill="#8e7b78"/><rect x="9" y="0" width="10" height="55" fill="#7a5d4f"/><path d="M12 0 L20 0 L19 24 L14 24Z" fill="#2e1a14"/><path d="M20 0 L79 0 L79 20 L40 14 L30 6Z" fill="#b88064"/><path d="M44 4 L79 0 L79 74 L64 85 L50 85 L46 64 L50 46 L48 22Z" fill="url(#sk)"/><path d="M26 22 L40 20 L42 26 L28 27Z" fill="#4a2a1e"/><path d="M60 22 L76 18 L76 24 L62 27Z" fill="#5a3426"/><path d="M42 60 L56 58 L58 63 L44 64Z" fill="#b56b60"/><rect x="2" y="46" width="22" height="14" fill="#cfa58e"/><path d="M0 60 L24 56 L34 72 L36 85 L0 85Z" fill="#5f6779"/><path d="M10 60 L22 58 L24 72 L16 76Z" fill="#a9b6d4"/><path d="M66 85 L79 72 L79 85Z" fill="#9bb2d6"/></g><rect x="0.5" y="0.5" width="78" height="84" fill="none" stroke="#777" stroke-width="1"/></svg>
<div class="t b" style="left:312.6px;top:245.00px;color:#111">Dr. Robert</div>
<div class="t b" style="left:312.6px;top:262.00px;color:#111">Carlos</div>
<div class="t b" style="left:312.6px;top:279.00px;color:#111">Hernandez</div>
<div class="t gr" style="left:312.6px;top:296.00px;">Nickname:</div>
<div class="t " style="left:375.8px;top:296.00px;color:#111">Bob</div>
<div class="t gr" style="left:312.6px;top:313.00px;">Maiden:</div>
<div style="position:absolute;left:454px;top:219px;width:235px;height:25px;background:linear-gradient(#d5e5f2,#e3eef8 50%,#fdfeff);border-radius:5px 5px 0 0"></div>
<div class="t th" style="left:460.5px;top:223.00px;">Contact Information</div>
<div class="t gr" style="left:465.8px;top:243.00px;">Primary phone</div>
<svg style="left:557px;top:244px" width="13" height="13" viewBox="0 0 13 13"><path d="M1.2 11.8 L2 8.6 L9.6 1 L12 3.4 L4.4 11Z" fill="#f2b655" stroke="#c98a3a" stroke-width="0.7"/><path d="M9.6 1 L12 3.4 L12.6 2.8 Q12.8 1 10.2 0.4Z" fill="#e88a8a"/><path d="M1.2 11.8 L2 8.6 L4.4 11Z" fill="#f0e0c0"/><path d="M1.2 11.8 L1.5 10.6 L2.4 11.5Z" fill="#444"/></svg>
<div class="t " style="left:465.8px;top:260.00px;font-size:11.75px;color:#111">+1 (303) 997-3301 (Home)</div>
<div class="t gr" style="left:465.8px;top:282.00px;">Primary email</div>
<svg style="left:552px;top:283px" width="13" height="13" viewBox="0 0 13 13"><path d="M1.2 11.8 L2 8.6 L9.6 1 L12 3.4 L4.4 11Z" fill="#f2b655" stroke="#c98a3a" stroke-width="0.7"/><path d="M9.6 1 L12 3.4 L12.6 2.8 Q12.8 1 10.2 0.4Z" fill="#e88a8a"/><path d="M1.2 11.8 L2 8.6 L4.4 11Z" fill="#f0e0c0"/><path d="M1.2 11.8 L1.5 10.6 L2.4 11.5Z" fill="#444"/></svg>
<div class="t lk2" style="left:465.8px;top:299.00px;font-size:11.75px;">wendyhernandez@gmail.com (Primary)</div>
<svg style="left:463px;top:323px" width="16" height="16" viewBox="0 0 16 16"><defs><linearGradient id="li" x1="0" y1="0" x2="0" y2="1"><stop offset="0" stop-color="#16a0e0"/><stop offset="1" stop-color="#2a78c0"/></linearGradient></defs><rect width="16" height="16" rx="2" fill="url(#li)"/><rect x="3.5" y="6.5" width="2.2" height="6.5" fill="#fff"/><circle cx="4.6" cy="4.3" r="1.3" fill="#fff"/><path d="M7.3 13 V6.5 H9.3 V7.6 Q10 6.3 11.5 6.3 Q13.3 6.3 13.3 8.8 V13 H11.2 V9.2 Q11.2 8.2 10.3 8.2 Q9.4 8.2 9.4 9.4 V13Z" fill="#fff"/></svg>
<svg style="left:483px;top:323px" width="16" height="16" viewBox="0 0 16 16"><rect width="16" height="16" rx="2" fill="#3a5c9a"/><rect x="1" y="1" width="14" height="5" fill="#4a6aa5"/><path d="M8.5 16 V9.5 H7 V7.5 H8.5 V6 Q8.5 3 11.5 3 H13 V5 H11.8 Q10.8 5 10.8 6 V7.5 H13 L12.7 9.5 H10.8 V16Z" fill="#fff"/></svg>
<div style="position:absolute;left:694px;top:219px;width:234px;height:25px;background:linear-gradient(#d5e5f2,#e3eef8 50%,#fdfeff);border-radius:5px 5px 0 0"></div>
<div class="t th" style="left:700.5px;top:223.00px;">Addresses</div>
<svg style="left:772px;top:224px" width="12" height="12" viewBox="0 0 12 12"><circle cx="6" cy="6" r="6" fill="#4b9840"/><circle cx="6" cy="6" r="5.3" fill="#5aa84a"/><path d="M6 2.4v7.2M2.4 6h7.2" stroke="#fff" stroke-width="2.3"/></svg>
<svg style="left:793px;top:223px" width="13" height="13" viewBox="0 0 13 13"><path d="M1.2 11.8 L2 8.6 L9.6 1 L12 3.4 L4.4 11Z" fill="#f2b655" stroke="#c98a3a" stroke-width="0.7"/><path d="M9.6 1 L12 3.4 L12.6 2.8 Q12.8 1 10.2 0.4Z" fill="#e88a8a"/><path d="M1.2 11.8 L2 8.6 L4.4 11Z" fill="#f0e0c0"/><path d="M1.2 11.8 L1.5 10.6 L2.4 11.5Z" fill="#444"/></svg>
<div class="t " style="left:820.4px;top:222.00px;font-size:11px;color:#222">(1 of 9)</div>
<svg style="left:863px;top:225px" width="5" height="9" viewBox="0 0 5 9"><path d="M5 0 L0 4.5 L5 9Z" fill="#5a82bd"/></svg>
<svg style="left:885px;top:225px" width="5" height="9" viewBox="0 0 5 9"><path d="M0 0 L5 4.5 L0 9Z" fill="#5a82bd"/></svg>
<div class="t " style="left:705.3px;top:241.00px;color:#111">23 River Park Drive</div>
<div class="t " style="left:705.3px;top:258.00px;color:#111">Great Falls, VA 22066</div>
<svg style="left:706px;top:279px" width="14" height="14" viewBox="0 0 14 14"><circle cx="7" cy="7" r="7" fill="#5aa648"/><path d="M3.6 7.2 L6 9.6 L10.6 4.6" stroke="#fff" stroke-width="2" fill="none"/></svg>
<div class="t b" style="left:726px;top:278.00px;color:#8a8a8a">Home (Current)</div>
<div style="position:absolute;left:934px;top:219px;width:235px;height:25px;background:linear-gradient(#d5e5f2,#e3eef8 50%,#fdfeff);border-radius:5px 5px 0 0"></div>
<div class="t th" style="left:940.5px;top:223.00px;">Primary Relationships</div>
<div class="t gr" style="left:945.5px;top:241.00px;">Spouse</div>
<div class="t lk2" style="left:945.5px;top:259.00px;">Wendy Hernandez</div>
<div class="t gr" style="left:945.5px;top:277.00px;">Household</div>
<div class="t lk2" style="left:945.5px;top:295.00px;">Robert and Wendy Hernandez</div>
<div class="t gr" style="left:945.5px;top:313.00px;">Primary business</div>
<div class="t lk2" style="left:945.5px;top:331.00px;">David &amp; Johnson Pharmaceuticals</div>
<div style="position:absolute;left:214px;top:352px;width:235px;height:25px;background:linear-gradient(#d5e5f2,#e3eef8 50%,#fdfeff);border-radius:5px 5px 0 0"></div>
<div class="t th" style="left:220.5px;top:356.00px;">Documentation and Interactions</div>
<div class="t lk2" style="left:223.2px;top:376.00px;">Notes: 5</div>
<svg style="left:330px;top:376px" width="12" height="12" viewBox="0 0 12 12"><circle cx="6" cy="6" r="6" fill="#4b9840"/><circle cx="6" cy="6" r="5.3" fill="#5aa84a"/><path d="M6 2.4v7.2M2.4 6h7.2" stroke="#fff" stroke-width="2.3"/></svg>
<div class="t lk2" style="left:346.5px;top:376.00px;">Note</div>
<div class="t " style="left:223.2px;top:401.00px;color:#111">Media links: 0</div>
<svg style="left:330px;top:402px" width="12" height="12" viewBox="0 0 12 12"><circle cx="6" cy="6" r="6" fill="#4b9840"/><circle cx="6" cy="6" r="5.3" fill="#5aa84a"/><path d="M6 2.4v7.2M2.4 6h7.2" stroke="#fff" stroke-width="2.3"/></svg>
<div class="t lk2" style="left:346.5px;top:401.00px;">Media link</div>
<div class="t lk2" style="left:223.2px;top:426.00px;">Attachments: 3</div>
<svg style="left:330px;top:426px" width="12" height="12" viewBox="0 0 12 12"><circle cx="6" cy="6" r="6" fill="#4b9840"/><circle cx="6" cy="6" r="5.3" fill="#5aa84a"/><path d="M6 2.4v7.2M2.4 6h7.2" stroke="#fff" stroke-width="2.3"/></svg>
<div class="t lk2" style="left:346.5px;top:426.00px;">Attachment</div>
<div class="t lk2" style="left:223.2px;top:451.00px;">Interactions: 13</div>
<svg style="left:330px;top:452px" width="12" height="12" viewBox="0 0 12 12"><circle cx="6" cy="6" r="6" fill="#4b9840"/><circle cx="6" cy="6" r="5.3" fill="#5aa84a"/><path d="M6 2.4v7.2M2.4 6h7.2" stroke="#fff" stroke-width="2.3"/></svg>
<div class="t lk2" style="left:346.5px;top:451.00px;">Interaction</div>
<div style="position:absolute;left:454px;top:352px;width:235px;height:25px;background:linear-gradient(#d5e5f2,#e3eef8 50%,#fdfeff);border-radius:5px 5px 0 0"></div>
<div class="t th" style="left:460.5px;top:356.00px;">Memberships</div>
<svg style="left:551px;top:357px" width="12" height="12" viewBox="0 0 12 12"><circle cx="6" cy="6" r="6" fill="#4b9840"/><circle cx="6" cy="6" r="5.3" fill="#5aa84a"/><path d="M6 2.4v7.2M2.4 6h7.2" stroke="#fff" stroke-width="2.3"/></svg>
<div class="t " style="left:578px;top:355.00px;font-size:11px;color:#222">(1 of 5)</div>
<svg style="left:621px;top:358px" width="5" height="9" viewBox="0 0 5 9"><path d="M5 0 L0 4.5 L5 9Z" fill="#5a82bd"/></svg>
<svg style="left:643px;top:358px" width="5" height="9" viewBox="0 0 5 9"><path d="M0 0 L5 4.5 L0 9Z" fill="#5a82bd"/></svg>
<div class="t lk2" style="left:465px;top:375.00px;">General Membership</div>
<svg style="left:463px;top:395px" width="14" height="14" viewBox="0 0 14 14"><circle cx="7" cy="7" r="7" fill="#5aa648"/><path d="M3.6 7.2 L6 9.6 L10.6 4.6" stroke="#fff" stroke-width="2" fill="none"/></svg>
<div class="t lk2" style="left:480px;top:394.00px;">Robert C. Hernandez</div>
<div class="t gr" style="left:465px;top:415.00px;">ID:</div>
<div class="t " style="left:491.6px;top:415.00px;color:#111">8-10000470</div>
<div class="t gr" style="left:585px;top:415.00px;">Status:</div>
<div class="t " style="left:634.7px;top:415.00px;color:#111">Active</div>
<div class="t gr" style="left:465px;top:434.00px;">Expiration:</div>
<div class="t " style="left:530.5px;top:434.00px;color:#111">12/31/2016</div>
<div class="t gr" style="left:465px;top:452.00px;">Level:</div>
<div class="t " style="left:509px;top:452.00px;color:#111">Family</div>
<div class="t gr" style="left:465px;top:470.00px;">Member since:</div>
<div class="t " style="left:552px;top:470.00px;color:#111">12/19/2014</div>
<div style="position:absolute;left:694px;top:352px;width:234px;height:25px;background:linear-gradient(#d5e5f2,#e3eef8 50%,#fdfeff);border-radius:5px 5px 0 0"></div>
<div class="t th" style="left:700.5px;top:356.00px;">Opportunities</div>
<svg style="left:794px;top:357px" width="12" height="12" viewBox="0 0 12 12"><circle cx="6" cy="6" r="6" fill="#4b9840"/><circle cx="6" cy="6" r="5.3" fill="#5aa84a"/><path d="M6 2.4v7.2M2.4 6h7.2" stroke="#fff" stroke-width="2.3"/></svg>
<div class="t " style="left:811.4px;top:355.00px;font-size:11px;color:#222">(1 of 3)</div>
<svg style="left:855px;top:358px" width="5" height="9" viewBox="0 0 5 9"><path d="M5 0 L0 4.5 L5 9Z" fill="#5a82bd"/></svg>
<svg style="left:877px;top:358px" width="5" height="9" viewBox="0 0 5 9"><path d="M0 0 L5 4.5 L0 9Z" fill="#5a82bd"/></svg>
<div class="t gr" style="left:703px;top:374.00px;">Plan:</div>
<svg style="left:746px;top:375px" width="13" height="13" viewBox="0 0 13 13"><path d="M1.2 11.8 L2 8.6 L9.6 1 L12 3.4 L4.4 11Z" fill="#f2b655" stroke="#c98a3a" stroke-width="0.7"/><path d="M9.6 1 L12 3.4 L12.6 2.8 Q12.8 1 10.2 0.4Z" fill="#e88a8a"/><path d="M1.2 11.8 L2 8.6 L4.4 11Z" fill="#f0e0c0"/><path d="M1.2 11.8 L1.5 10.6 L2.4 11.5Z" fill="#444"/></svg>
<div class="t " style="left:869.3px;top:374.00px;color:#111;letter-spacing:-.1px">10/16/2014</div>
<div class="t lk2" style="left:703px;top:391.00px;">Major giving - Major Gift</div>
<div class="t gr" style="left:703px;top:408.00px;">Primary manager:</div>
<svg style="left:815px;top:409px" width="13" height="13" viewBox="0 0 13 13"><path d="M1.2 11.8 L2 8.6 L9.6 1 L12 3.4 L4.4 11Z" fill="#f2b655" stroke="#c98a3a" stroke-width="0.7"/><path d="M9.6 1 L12 3.4 L12.6 2.8 Q12.8 1 10.2 0.4Z" fill="#e88a8a"/><path d="M1.2 11.8 L2 8.6 L4.4 11Z" fill="#f0e0c0"/><path d="M1.2 11.8 L1.5 10.6 L2.4 11.5Z" fill="#444"/></svg>
<div class="t lk2" style="left:703px;top:425.00px;">James Menezes</div>
<div class="t gr" style="left:703px;top:442.00px;">Amount:</div>
<svg style="left:764px;top:443px" width="13" height="13" viewBox="0 0 13 13"><path d="M1.2 11.8 L2 8.6 L9.6 1 L12 3.4 L4.4 11Z" fill="#f2b655" stroke="#c98a3a" stroke-width="0.7"/><path d="M9.6 1 L12 3.4 L12.6 2.8 Q12.8 1 10.2 0.4Z" fill="#e88a8a"/><path d="M1.2 11.8 L2 8.6 L4.4 11Z" fill="#f0e0c0"/><path d="M1.2 11.8 L1.5 10.6 L2.4 11.5Z" fill="#444"/></svg>
<div class="t lk2" style="left:703px;top:459.00px;">$50,000.00 (Accepted)</div>
<div style="position:absolute;left:214px;top:484px;width:1050px;height:2px;background:linear-gradient(90deg,#ededed,#f0f0f0 85%,rgba(255,255,255,0))"></div>
<svg style="left:220px;top:502px" width="12" height="12" viewBox="0 0 12 12"><path d="M6 0 L12 6 H8.5 V11 H3.5 V6 H0Z" fill="#4a90d0"/></svg>
<div class="t " style="left:236.5px;top:502.00px;color:#222;letter-spacing:-.2px">Show less</div>
<svg style="left:1165px;top:501px" width="14" height="14" viewBox="0 0 16 16"><rect x="6.6" y="0.3" width="2.8" height="3.4" fill="#d0dbe8" stroke="#8a9098" stroke-width="0.5" transform="rotate(0 8 8)"/><rect x="6.6" y="0.3" width="2.8" height="3.4" fill="#d0dbe8" stroke="#8a9098" stroke-width="0.5" transform="rotate(45 8 8)"/><rect x="6.6" y="0.3" width="2.8" height="3.4" fill="#d0dbe8" stroke="#8a9098" stroke-width="0.5" transform="rotate(90 8 8)"/><rect x="6.6" y="0.3" width="2.8" height="3.4" fill="#d0dbe8" stroke="#8a9098" stroke-width="0.5" transform="rotate(135 8 8)"/><rect x="6.6" y="0.3" width="2.8" height="3.4" fill="#d0dbe8" stroke="#8a9098" stroke-width="0.5" transform="rotate(180 8 8)"/><rect x="6.6" y="0.3" width="2.8" height="3.4" fill="#d0dbe8" stroke="#8a9098" stroke-width="0.5" transform="rotate(225 8 8)"/><rect x="6.6" y="0.3" width="2.8" height="3.4" fill="#d0dbe8" stroke="#8a9098" stroke-width="0.5" transform="rotate(270 8 8)"/><rect x="6.6" y="0.3" width="2.8" height="3.4" fill="#d0dbe8" stroke="#8a9098" stroke-width="0.5" transform="rotate(315 8 8)"/><circle cx="8" cy="8" r="5.6" fill="#d0dbe8" stroke="#8a9098" stroke-width="0.8"/><circle cx="8" cy="8" r="2.8" fill="#fff" stroke="#8a9098" stroke-width="0.8"/></svg>
<div class="t " style="left:1182px;top:502.00px;color:#222">Customize tiles</div>
<div style="position:absolute;left:203px;top:579px;width:1072px;height:619px;background:#fff;border:1px solid #d5d5d5;border-top:1px solid #c9c9c9"></div>
<div style="position:absolute;left:203px;top:552px;width:17px;height:27px;background:linear-gradient(#fff 0,#fff 2px,#ececec 3px,#dadada);border:1px solid #c8c8c8;border-bottom:none;box-sizing:border-box"></div>
<svg style="left:207px;top:559px" width="10" height="9" viewBox="0 0 10 9"><path d="M0 4.5 L4.5 0 V3 H9 V6 H4.5 V9Z" fill="#9a9a9a"/></svg>
<div style="position:absolute;left:222px;top:554px;width:71px;height:25px;background:linear-gradient(#86a5c8,#5a7fb3)"></div>
<div class="t " style="left:232px;top:560.00px;color:#fff">Summary</div>
<div style="position:absolute;left:293.5px;top:554px;width:89.0px;height:25px;background:linear-gradient(#fdfdfd,#f4f5f7 40%,#e2e5ea);border-right:1px solid #cfcfcf;border-top:1px solid #c9c9c9;box-sizing:border-box"></div>
<div class="t " style="left:303.3px;top:560.00px;color:#4d7098">Personal Info</div>
<div style="position:absolute;left:382.5px;top:554px;width:62.0px;height:25px;background:linear-gradient(#fdfdfd,#f4f5f7 40%,#e2e5ea);border-right:1px solid #cfcfcf;border-top:1px solid #c9c9c9;box-sizing:border-box"></div>
<div class="t " style="left:393px;top:560.00px;color:#4d7098">Contact</div>
<div style="position:absolute;left:444.5px;top:554px;width:91.10000000000002px;height:25px;background:linear-gradient(#fdfdfd,#f4f5f7 40%,#e2e5ea);border-right:1px solid #cfcfcf;border-top:1px solid #c9c9c9;box-sizing:border-box"></div>
<div class="t " style="left:455px;top:560.00px;color:#4d7098">Relationships</div>
<div style="position:absolute;left:535.6px;top:554px;width:191.19999999999993px;height:25px;background:linear-gradient(#fdfdfd,#f4f5f7 40%,#e2e5ea);border-right:1px solid #cfcfcf;border-top:1px solid #c9c9c9;box-sizing:border-box"></div>
<div class="t " style="left:546.3px;top:560.00px;color:#4d7098">Documentation and Interactions</div>
<div style="position:absolute;left:726.8px;top:554px;width:94.0px;height:25px;background:linear-gradient(#fdfdfd,#f4f5f7 40%,#e2e5ea);border-right:1px solid #cfcfcf;border-top:1px solid #c9c9c9;box-sizing:border-box"></div>
<div class="t " style="left:738.6px;top:560.00px;color:#4d7098">Memberships</div>
<div style="position:absolute;left:820.8px;top:554px;width:67.0px;height:25px;background:linear-gradient(#fdfdfd,#f4f5f7 40%,#e2e5ea);border-right:1px solid #cfcfcf;border-top:1px solid #c9c9c9;box-sizing:border-box"></div>
<div class="t " style="left:830.7px;top:560.00px;color:#4d7098">Prospect</div>
<div style="position:absolute;left:887.8px;top:554px;width:72.60000000000002px;height:25px;background:linear-gradient(#fdfdfd,#f4f5f7 40%,#e2e5ea);border-right:1px solid #cfcfcf;border-top:1px solid #c9c9c9;box-sizing:border-box"></div>
<div class="t " style="left:897.7px;top:560.00px;color:#4d7098">Attributes</div>
<div style="position:absolute;left:960.4px;top:554px;width:65.60000000000002px;height:25px;background:linear-gradient(#fdfdfd,#f4f5f7 40%,#e2e5ea);border-right:1px solid #cfcfcf;border-top:1px solid #c9c9c9;box-sizing:border-box"></div>
<div class="t " style="left:970.8px;top:560.00px;color:#4d7098">Revenue</div>
<div style="position:absolute;left:1026px;top:554px;width:87.5px;height:25px;background:linear-gradient(#fdfdfd,#f4f5f7 40%,#e2e5ea);border-right:1px solid #cfcfcf;border-top:1px solid #c9c9c9;box-sizing:border-box"></div>
<div class="t " style="left:1037px;top:560.00px;color:#4d7098">Sales Orders</div>
<div style="position:absolute;left:1113.5px;top:554px;width:110.20000000000005px;height:25px;background:linear-gradient(#fdfdfd,#f4f5f7 40%,#e2e5ea);border-right:1px solid #cfcfcf;border-top:1px solid #c9c9c9;box-sizing:border-box"></div>
<div class="t " style="left:1124.3px;top:560.00px;color:#4d7098">Communications</div>
<div style="position:absolute;left:1223.7px;top:554px;width:35.299999999999955px;height:25px;background:linear-gradient(#fdfdfd,#f4f5f7 40%,#e2e5ea);border-right:1px solid #cfcfcf;border-top:1px solid #c9c9c9;box-sizing:border-box"></div>
<div class="t " style="left:1234.5px;top:560.00px;color:#4d7098">Histo</div>
<div style="position:absolute;left:1259px;top:552px;width:18px;height:27px;background:linear-gradient(#fff 0,#fff 2px,#e8e8e8 3px,#d6d6d6);border:1px solid #c0c0c0;border-right:none;border-bottom:none;box-sizing:border-box"></div>
<svg style="left:1264px;top:559px" width="9" height="9" viewBox="0 0 9 9"><path d="M9 4.5 L5 0 V3 H0 V6 H5 V9Z" fill="#58565a"/></svg>
<div class="t gr" style="left:216px;top:588.00px;font-size:11.65px;">Revenue summary</div>
<div class="t lk2" style="right:720px;top:588.00px;">View all revenue</div>
<div style="position:absolute;left:216px;top:608px;width:350px;height:1px;background:#cfdcb8"></div>
<div class="t " style="left:221.2px;top:614.00px;color:#222">Total revenue:</div>
<div class="t " style="right:723px;top:614.00px;color:#222;letter-spacing:-.35px">$2,933,015.33</div>
<div class="t " style="left:221.2px;top:637.00px;color:#222">Total household revenue:</div>
<div class="t " style="right:723px;top:637.00px;color:#222;letter-spacing:-.35px">$2,935,073.33</div>
<div class="t " style="left:221.2px;top:660.00px;color:#222">Membership revenue:</div>
<div class="t " style="right:723px;top:660.00px;color:#222;letter-spacing:-.35px">$1,285.00</div>
<div class="t " style="left:221.2px;top:683.00px;color:#222">Event revenue:</div>
<div class="t " style="right:723px;top:683.00px;color:#222;letter-spacing:-.35px">$2,445.00</div>
<div class="t " style="left:221.2px;top:706.00px;color:#222">Ticket revenue:</div>
<div class="t " style="right:723px;top:706.00px;color:#222;letter-spacing:-.35px">$8,649.94</div>
<div class="t " style="left:221.2px;top:729.00px;color:#222">Facility revenue:</div>
<div class="t " style="right:723px;top:729.00px;color:#222;letter-spacing:-.35px">$100.00</div>
<div class="t " style="left:221.2px;top:752.00px;color:#222">Merchandise revenue:</div>
<div class="t " style="right:723px;top:752.00px;color:#222;letter-spacing:-.35px">$1,164.26</div>
<div class="t gr" style="left:751px;top:588.00px;font-size:11.65px;">Recent revenue</div>
<div style="position:absolute;left:751px;top:608px;width:350px;height:1px;background:#cfdcb8"></div>
<div class="t " style="left:756px;top:614.00px;color:#222">2/16/2016</div>
<div class="t lk2" style="left:832.5px;top:614.00px;">Donation</div>
<div class="t " style="right:188px;top:614.00px;color:#222;letter-spacing:-.35px">$500.00</div>
<div class="t " style="left:756px;top:637.00px;color:#222">2/9/2016</div>
<div class="t lk2" style="left:832.5px;top:637.00px;">Order</div>
<div class="t " style="right:188px;top:637.00px;color:#222;letter-spacing:-.35px">$10.00</div>
<div class="t " style="left:756px;top:660.00px;color:#222">2/5/2016</div>
<div class="t lk2" style="left:832.5px;top:660.00px;">Order</div>
<div class="t " style="right:188px;top:660.00px;color:#222;letter-spacing:-.35px">$10.00</div>
<div class="t " style="left:756px;top:683.00px;color:#222">2/5/2016</div>
<div class="t lk2" style="left:832.5px;top:683.00px;">Order</div>
<div class="t " style="right:188px;top:683.00px;color:#222;letter-spacing:-.35px">$21.90</div>
<div class="t " style="left:756px;top:706.00px;color:#222">2/4/2016</div>
<div class="t lk2" style="left:832.5px;top:706.00px;">Order</div>
<div class="t " style="right:188px;top:706.00px;color:#222;letter-spacing:-.35px">$10.00</div>
<div class="t " style="left:756px;top:729.00px;color:#222">1/28/2016</div>
<div class="t lk2" style="left:832.5px;top:729.00px;">Order</div>
<div class="t " style="right:188px;top:729.00px;color:#222;letter-spacing:-.35px">$84.00</div>
<div class="t " style="left:756px;top:752.00px;color:#222">1/26/2016</div>
<div class="t lk2" style="left:832.5px;top:752.00px;">Order</div>
<div class="t " style="right:188px;top:752.00px;color:#222;letter-spacing:-.35px">$10.00</div>
<div class="t " style="left:756px;top:775.00px;color:#222">1/25/2016</div>
<div class="t lk2" style="left:832.5px;top:775.00px;">Order</div>
<div class="t " style="right:188px;top:775.00px;color:#222;letter-spacing:-.35px">$34.90</div>
<div class="t " style="left:756px;top:798.00px;color:#222">12/18/2015</div>
<div class="t lk2" style="left:832.5px;top:798.00px;">Pledge write-off</div>
<div class="t " style="right:188px;top:798.00px;color:#222;letter-spacing:-.35px">$4,000,000.00</div>
<div class="t " style="left:756px;top:821.00px;color:#222">12/17/2015</div>
<div class="t lk2" style="left:832.5px;top:821.00px;">Pledge</div>
<div class="t " style="right:188px;top:821.00px;color:#222;letter-spacing:-.35px">$5,000,000.00</div>
<div class="t gr" style="left:216px;top:864.00px;font-size:11.65px;">Recent and upcoming activities</div>
<div style="position:absolute;left:216px;top:884px;width:350px;height:1px;background:#cfdcb8"></div>
<div class="t " style="left:221.2px;top:890.00px;color:#222">2/16/2016</div>
<div class="t lk2" style="left:297px;top:890.00px;">Admission</div>
<div class="t " style="left:444px;top:890.00px;color:#222">General Admission</div>
<div class="t " style="left:221.2px;top:913.00px;color:#222">2/16/2016</div>
<div class="t lk2" style="left:297px;top:913.00px;">Event registration</div>
<div class="t " style="left:444px;top:913.00px;color:#222">Annual Gala</div>
<div class="t " style="left:221.2px;top:936.00px;color:#222">2/10/2016</div>
<div class="t lk2" style="left:297px;top:936.00px;">Preregistered program</div>
<div class="t " style="left:444px;top:936.00px;color:#222">Space Camp</div>
<div class="t " style="left:221.2px;top:959.00px;color:#222">2/9/2016</div>
<div class="t lk2" style="left:297px;top:959.00px;">Admission</div>
<div class="t " style="left:444px;top:959.00px;color:#222">General Admission</div>
<div class="t " style="left:221.2px;top:982.00px;color:#222">2/9/2016</div>
<div class="t lk2" style="left:297px;top:982.00px;">Admission</div>
<div class="t " style="left:444px;top:982.00px;color:#222">IMAX: Pandas</div>
<div class="t " style="left:221.2px;top:1005.00px;color:#222">2/8/2016</div>
<div class="t lk2" style="left:297px;top:1005.00px;">Admission</div>
<div class="t " style="left:444px;top:1005.00px;color:#222">General Admission</div>
<div class="t " style="left:221.2px;top:1028.00px;color:#222">2/5/2016</div>
<div class="t lk2" style="left:297px;top:1028.00px;">Admission</div>
<div class="t " style="left:444px;top:1028.00px;color:#222">General Admission</div>
<div class="t " style="left:221.2px;top:1051.00px;color:#222">2/5/2016</div>
<div class="t lk2" style="left:297px;top:1051.00px;">Admission</div>
<div class="t " style="left:444px;top:1051.00px;color:#222">General Admission</div>
<div class="t " style="left:221.2px;top:1074.00px;color:#222">11/28/2012</div>
<div class="t lk2" style="left:297px;top:1074.00px;">Admission</div>
<div class="t " style="left:444px;top:1074.00px;color:#222">General Admission</div>
<div class="t " style="left:221.2px;top:1097.00px;color:#222">12/21/2010</div>
<div class="t lk2" style="left:297px;top:1097.00px;">Admission</div>
<div class="t " style="left:444px;top:1097.00px;color:#222">Crossroads</div>
<div class="t gr" style="left:751px;top:863.00px;font-size:11.65px;">Recent and upcoming communications</div>
<div class="t lk2" style="right:185px;top:863.00px;">View all</div>
<div style="position:absolute;left:751px;top:884px;width:350px;height:1px;background:#cfdcb8"></div>
<div class="t " style="left:756px;top:898.00px;color:#222">1/18/2016</div>
<div class="t " style="left:832.5px;top:898.00px;color:#222">Event Invitation</div>
<div class="t " style="left:937.5px;top:890.00px;color:#222">Save the Date - 2016</div>
<div class="t " style="left:937.5px;top:906.00px;color:#222">Fundraising Gala</div>
<div class="t " style="left:756px;top:937.00px;color:#222">12/15/2015</div>
<div class="t " style="left:832.5px;top:937.00px;color:#222">Event Invitation</div>
<div class="t " style="left:937.5px;top:929.00px;color:#222">Save the Date! - New Years</div>
<div class="t " style="left:937.5px;top:945.00px;color:#222">Party &lt;allows Designations&gt;</div>
<div class="t " style="left:756px;top:976.00px;color:#222">10/21/2015</div>
<div class="t " style="left:832.5px;top:976.00px;color:#222">Event Invitation</div>
<div class="t " style="left:937.5px;top:968.00px;color:#222">Last Chance Mailing - Lost</div>
<div class="t " style="left:937.5px;top:984.00px;color:#222">Oasis</div>
<div class="t " style="left:756px;top:1007.00px;color:#222">7/27/2015</div>
<div class="t " style="left:832.5px;top:1007.00px;color:#222">Acknowledgement</div>
<div class="t " style="left:937.5px;top:1007.00px;color:#222">Sample Letter</div>
<div class="t " style="left:756px;top:1030.00px;color:#222">7/27/2015</div>
<div class="t " style="left:832.5px;top:1030.00px;color:#222">Acknowledgement</div>
<div class="t " style="left:937.5px;top:1030.00px;color:#222">Sample Letter</div>
<div class="t " style="left:756px;top:1053.00px;color:#222">7/27/2015</div>
<div class="t " style="left:832.5px;top:1053.00px;color:#222">Acknowledgement</div>
<div class="t " style="left:937.5px;top:1053.00px;color:#222">Sample Letter</div>
<div class="t " style="left:756px;top:1076.00px;color:#222">7/27/2015</div>
<div class="t " style="left:832.5px;top:1076.00px;color:#222">Acknowledgement</div>
<div class="t " style="left:937.5px;top:1076.00px;color:#222">Sample Letter</div>
<div class="t " style="left:756px;top:1099.00px;color:#222">7/27/2015</div>
<div class="t " style="left:832.5px;top:1099.00px;color:#222">Acknowledgement</div>
<div class="t " style="left:937.5px;top:1099.00px;color:#222">Sample Letter</div>
<div class="t " style="left:756px;top:1122.00px;color:#222">7/27/2015</div>
<div class="t " style="left:832.5px;top:1122.00px;color:#222">Acknowledgement</div>
<div class="t " style="left:937.5px;top:1122.00px;color:#222">Sample Letter</div>
<div class="t " style="left:756px;top:1153.00px;color:#222"></div>
<div class="t " style="left:832.5px;top:1153.00px;color:#222">Appeal Mailing</div>
<div class="t " style="left:937.5px;top:1145.00px;color:#222">Spring Membership Appeal -</div>
<div class="t " style="left:937.5px;top:1161.00px;color:#222">Spring Membership Mailing</div>
</body></html>
